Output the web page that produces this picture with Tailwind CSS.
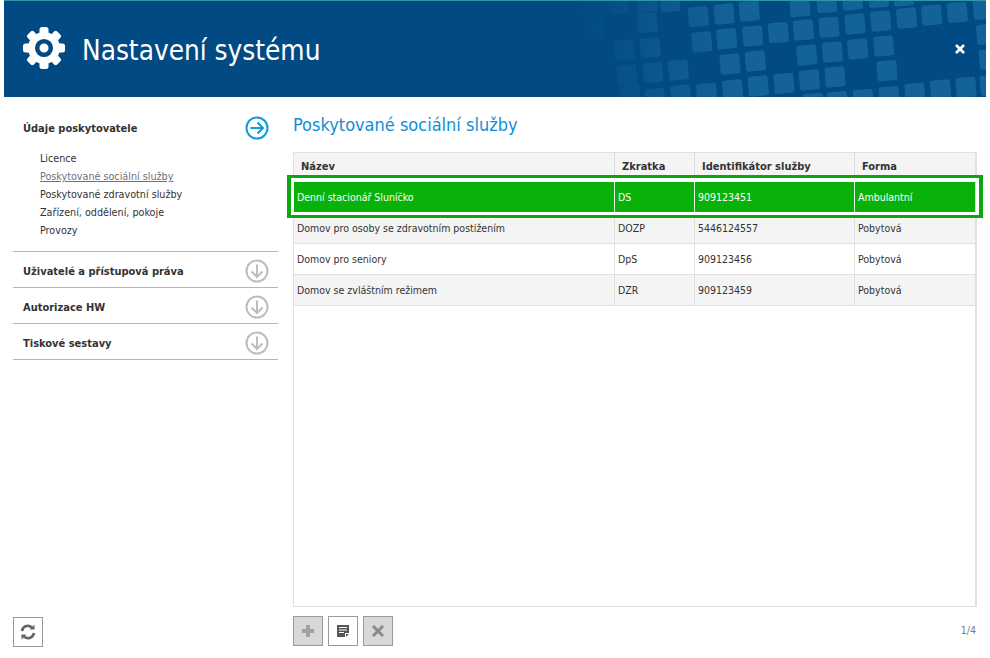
<!doctype html>
<html>
<head>
<meta charset="utf-8">
<title>Nastavení systému</title>
<script src="https://cdn.jsdelivr.net/npm/@tailwindcss/browser@4"></script>
</head>
<body class="bg-white font-['DejaVu_Sans_Condensed','DejaVu_Sans',sans-serif] text-[11px] text-[#333]">
<div class="w-[990px] h-[658px] flex flex-col overflow-hidden">
	<!-- header -->
	<div class="relative ml-1 w-[982px] h-[97px] shrink-0 bg-[#014a83] border-t border-[#2f97a8] flex items-center overflow-hidden">
		<svg class="absolute left-[576px] top-[-1px]" width="406" height="97" viewBox="-180 0 1218 291" fill="#14629a">
			<rect x="-175" y="-15" width="60" height="60" rx="7" transform="rotate(-5 -145 15)"/>
			<rect x="-95" y="-20" width="60" height="60" rx="7" transform="rotate(-5 -65 10)"/>
			<rect x="-165" y="55" width="60" height="60" rx="7" transform="rotate(-5 -135 85)"/>
			<rect x="-78" y="120" width="60" height="60" rx="7" transform="rotate(-5 -48 150)"/>
			<rect x="-70" y="195" width="60" height="60" rx="7" transform="rotate(-5 -40 225)"/>
			<rect x="-60" y="255" width="60" height="60" rx="7" transform="rotate(-5 -30 285)"/>
			<rect x="-9" y="-25" width="60" height="60" rx="7" transform="rotate(-5 21 5)"/>
			<rect x="60" y="-25" width="60" height="60" rx="7" transform="rotate(-5 90 5)"/>
			<rect x="-8" y="38" width="60" height="60" rx="7" transform="rotate(-5 22 68)"/>
			<rect x="145" y="20" width="60" height="60" rx="7" transform="rotate(-5 175 50)"/>
			<rect x="222" y="12" width="60" height="60" rx="7" transform="rotate(-5 252 42)"/>
			<rect x="298" y="3" width="60" height="60" rx="7" transform="rotate(-5 328 33)"/>
			<rect x="385" y="68" width="60" height="60" rx="7" transform="rotate(-5 415 98)"/>
			<rect x="460" y="60" width="60" height="60" rx="7" transform="rotate(-5 490 90)"/>
			<rect x="537" y="52" width="60" height="60" rx="7" transform="rotate(-5 567 82)"/>
			<rect x="615" y="42" width="60" height="60" rx="7" transform="rotate(-5 645 72)"/>
			<rect x="692" y="33" width="60" height="60" rx="7" transform="rotate(-5 722 63)"/>
			<rect x="770" y="24" width="60" height="60" rx="7" transform="rotate(-5 800 54)"/>
			<rect x="845" y="15" width="60" height="60" rx="7" transform="rotate(-5 875 45)"/>
			<rect x="922" y="7" width="60" height="60" rx="7" transform="rotate(-5 952 37)"/>
			<rect x="1000" y="-2" width="60" height="60" rx="7" transform="rotate(-5 1030 28)"/>
			<rect x="155" y="96" width="60" height="60" rx="7" transform="rotate(-5 185 126)"/>
			<rect x="230" y="86" width="60" height="60" rx="7" transform="rotate(-5 260 116)"/>
			<rect x="308" y="78" width="60" height="60" rx="7" transform="rotate(-5 338 108)"/>
			<rect x="0" y="113" width="60" height="60" rx="7" transform="rotate(-5 30 143)"/>
			<rect x="470" y="135" width="60" height="60" rx="7" transform="rotate(-5 500 165)"/>
			<rect x="547" y="126" width="60" height="60" rx="7" transform="rotate(-5 577 156)"/>
			<rect x="623" y="117" width="60" height="60" rx="7" transform="rotate(-5 653 147)"/>
			<rect x="701" y="108" width="60" height="60" rx="7" transform="rotate(-5 731 138)"/>
			<rect x="240" y="162" width="60" height="60" rx="7" transform="rotate(-5 270 192)"/>
			<rect x="316" y="153" width="60" height="60" rx="7" transform="rotate(-5 346 183)"/>
			<rect x="8" y="188" width="60" height="60" rx="7" transform="rotate(-5 38 218)"/>
			<rect x="85" y="180" width="60" height="60" rx="7" transform="rotate(-5 115 210)"/>
			<rect x="711" y="182" width="60" height="60" rx="7" transform="rotate(-5 741 212)"/>
			<rect x="325" y="228" width="60" height="60" rx="7" transform="rotate(-5 355 258)"/>
			<rect x="402" y="220" width="60" height="60" rx="7" transform="rotate(-5 432 250)"/>
			<rect x="478" y="210" width="60" height="60" rx="7" transform="rotate(-5 508 240)"/>
			<rect x="555" y="201" width="60" height="60" rx="7" transform="rotate(-5 585 231)"/>
			<rect x="15" y="265" width="60" height="60" rx="7" transform="rotate(-5 45 295)"/>
			<rect x="92" y="255" width="60" height="60" rx="7" transform="rotate(-5 122 285)"/>
			<rect x="170" y="250" width="60" height="60" rx="7" transform="rotate(-5 200 280)"/>
			<rect x="248" y="240" width="60" height="60" rx="7" transform="rotate(-5 278 270)"/>
			<rect x="795" y="250" width="60" height="60" rx="7" transform="rotate(-5 825 280)"/>
			<rect x="872" y="240" width="60" height="60" rx="7" transform="rotate(-5 902 270)"/>
			<rect x="948" y="232" width="60" height="60" rx="7" transform="rotate(-5 978 262)"/>
			<rect x="1020" y="225" width="60" height="60" rx="7" transform="rotate(-5 1050 255)"/>
			<rect x="490" y="280" width="60" height="60" rx="7" transform="rotate(-5 520 310)"/>
			<rect x="563" y="275" width="60" height="60" rx="7" transform="rotate(-5 593 305)"/>
			<rect x="640" y="268" width="60" height="60" rx="7" transform="rotate(-5 670 298)"/>
			<rect x="718" y="260" width="60" height="60" rx="7" transform="rotate(-5 748 290)"/>
			<rect x="1010" y="73" width="60" height="60" rx="7" transform="rotate(-5 1040 103)"/>
			<rect x="1018" y="148" width="60" height="60" rx="7" transform="rotate(-5 1048 178)"/>
			<rect x="450" y="-10" width="60" height="60" rx="7" transform="rotate(-5 480 20)"/>
			<rect x="530" y="-22" width="60" height="60" rx="7" transform="rotate(-5 560 8)"/>
			<rect x="607" y="-30" width="60" height="60" rx="7" transform="rotate(-5 637 0)"/>
			<rect x="685" y="-38" width="60" height="60" rx="7" transform="rotate(-5 715 -8)"/>
			<rect x="760" y="-42" width="60" height="60" rx="7" transform="rotate(-5 790 -12)"/>
		</svg>
		<div class="absolute left-[576px] top-0 w-[150px] h-full bg-linear-to-r from-[#014a83] to-[#014a8300]"></div>
		<svg class="relative ml-[18px] -mt-[2px]" width="44" height="44" viewBox="0 0 44 44">
			<g fill="#fff">
				<circle cx="22" cy="22" r="16"/>
				<rect x="17.500" y="1" width="9" height="42" rx="2.500"/>
				<rect x="17.500" y="1" width="9" height="42" rx="2.500" transform="rotate(45 22 22)"/>
				<rect x="17.500" y="1" width="9" height="42" rx="2.500" transform="rotate(90 22 22)"/>
				<rect x="17.500" y="1" width="9" height="42" rx="2.500" transform="rotate(135 22 22)"/>
			</g>
			<circle cx="22" cy="22" r="6.800" fill="none" stroke="#014a83" stroke-width="4.500"/>
		</svg>
		<div class="relative ml-[16px] mt-[4px] text-[27.7px] leading-none text-white">Nastavení systému</div>
		<svg class="absolute left-[950px] top-[42px]" width="12" height="12" viewBox="0 0 12 12"><path d="M2 2 L10 10 M10 2 L2 10" stroke="#fff" stroke-width="2.600"/></svg>
	</div>

	<div class="flex flex-1 min-h-0">
		<!-- sidebar -->
		<div class="w-[293px] shrink-0 flex flex-col pl-[13px] pr-[15px]">
			<div class="border-b border-[#b5b5b5] h-[155px]">
				<div class="flex items-center justify-between h-[62px] pl-[10px] pr-[9px] mb-[-9px]">
					<span class="font-bold mt-[2px]">Údaje poskytovatele</span>
					<svg width="24" height="24" viewBox="0 0 24 24" fill="none" stroke="#0f9ae0" stroke-width="2"><circle cx="12" cy="12" r="10.500"/><path d="M5.500 12H18M12.500 6.500 18 12l-5.500 5.500"/></svg>
				</div>
				<ul class="pl-[27px] text-[10.7px]">
					<li class="h-[18px] leading-[18px]">Licence</li>
					<li class="h-[18px] leading-[18px] text-[#6f6f7f] underline">Poskytované sociální služby</li>
					<li class="h-[18px] leading-[18px]">Poskytované zdravotní služby</li>
					<li class="h-[18px] leading-[18px]">Zařízení, oddělení, pokoje</li>
					<li class="h-[18px] leading-[18px]">Provozy</li>
				</ul>
			</div>
			<div class="border-b border-[#b5b5b5] h-[36px] pt-[3px] flex items-center justify-between pl-[10px] pr-[9px]">
				<span class="font-bold mt-[2px]">Uživatelé a přístupová práva</span>
				<svg width="24" height="24" viewBox="0 0 24 24" fill="none" stroke="#bdbdbd" stroke-width="2"><circle cx="12" cy="12" r="10.500"/><path d="M12 5.500V18M6.500 12.500 12 18l5.500-5.500"/></svg>
			</div>
			<div class="border-b border-[#b5b5b5] h-[36px] pt-[3px] flex items-center justify-between pl-[10px] pr-[9px]">
				<span class="font-bold mt-[2px]">Autorizace HW</span>
				<svg width="24" height="24" viewBox="0 0 24 24" fill="none" stroke="#bdbdbd" stroke-width="2"><circle cx="12" cy="12" r="10.500"/><path d="M12 5.500V18M6.500 12.500 12 18l5.500-5.500"/></svg>
			</div>
			<div class="border-b border-[#b5b5b5] h-[36px] pt-[3px] flex items-center justify-between pl-[10px] pr-[9px]">
				<span class="font-bold mt-[2px]">Tiskové sestavy</span>
				<svg width="24" height="24" viewBox="0 0 24 24" fill="none" stroke="#bdbdbd" stroke-width="2"><circle cx="12" cy="12" r="10.500"/><path d="M12 5.500V18M6.500 12.500 12 18l5.500-5.500"/></svg>
			</div>
			<div class="mt-auto mb-[11px]">
				<div class="w-[30px] h-[30px] border border-[#9a9a9a] flex items-center justify-center">
					<svg width="18" height="18" viewBox="0 0 18 18" fill="none" stroke="#666" stroke-width="2.600"><path d="M3 8a6 6 0 0 1 10.500-3M15 10a6 6 0 0 1-10.500 3"/><path d="M15.500 1.500v5h-5zM2.500 16.500v-5h5z" fill="#666" stroke="none"/></svg>
				</div>
			</div>
		</div>

		<!-- content -->
		<div class="flex-1 min-w-0 flex flex-col pr-[13px]">
			<h1 class="text-[18px] leading-[24px] mt-[16px] text-[#0f8fd6] h-[39px]">Poskytované sociální služby</h1>
			<div class="relative h-[455px] border border-r-2 border-[#e0e0e0]">
				<div class="flex h-[29px] bg-[#f4f4f4] font-bold leading-[28px]">
					<div class="w-[321px] pl-[7px] border-r border-[#dcdcdc]">Název</div>
					<div class="w-[80px] pl-[7px] border-r border-[#dcdcdc]">Zkratka</div>
					<div class="w-[160px] pl-[7px] border-r border-[#dcdcdc]">Identifikátor služby</div>
					<div class="flex-1 pl-[7px]">Forma</div>
				</div>
				<div class="flex h-[31px] bg-[#09b209] text-white text-[10.5px] leading-[30px]">
					<div class="w-[321px] pl-[3px] border-r border-[#e8f5e8]">Denní stacionář Sluníčko</div>
					<div class="w-[80px] pl-[3px] border-r border-[#e8f5e8]">DS</div>
					<div class="w-[160px] pl-[3px] border-r border-[#e8f5e8]">909123451</div>
					<div class="flex-1 pl-[3px]">Ambulantní</div>
				</div>
				<div class="flex h-[31px] bg-[#f4f4f4] border-b border-[#e0e0e0] text-[10.5px] leading-[30px]">
					<div class="w-[321px] pl-[3px] border-r border-[#e0e0e0]">Domov pro osoby se zdravotním postižením</div>
					<div class="w-[80px] pl-[3px] border-r border-[#e0e0e0]">DOZP</div>
					<div class="w-[160px] pl-[3px] border-r border-[#e0e0e0]">5446124557</div>
					<div class="flex-1 pl-[3px]">Pobytová</div>
				</div>
				<div class="flex h-[31px] bg-white border-b border-[#e0e0e0] text-[10.5px] leading-[30px]">
					<div class="w-[321px] pl-[3px] border-r border-[#e0e0e0]">Domov pro seniory</div>
					<div class="w-[80px] pl-[3px] border-r border-[#e0e0e0]">DpS</div>
					<div class="w-[160px] pl-[3px] border-r border-[#e0e0e0]">909123456</div>
					<div class="flex-1 pl-[3px]">Pobytová</div>
				</div>
				<div class="flex h-[31px] bg-[#f4f4f4] border-b border-[#e0e0e0] text-[10.5px] leading-[30px]">
					<div class="w-[321px] pl-[3px] border-r border-[#e0e0e0]">Domov se zvláštním režimem</div>
					<div class="w-[80px] pl-[3px] border-r border-[#e0e0e0]">DZR</div>
					<div class="w-[160px] pl-[3px] border-r border-[#e0e0e0]">909123459</div>
					<div class="flex-1 pl-[3px]">Pobytová</div>
				</div>
				<div class="absolute left-[-7px] top-[22px] w-[696px] h-[43px] border-y-[3px] border-x-4 border-[#09a80f]">
					<div class="h-full border-[3px] border-t-4 border-white"></div>
				</div>
			</div>
			<div class="flex items-center gap-[5px] mt-[9px]">
				<div class="w-[30px] h-[30px] bg-[#d8d8d8] border border-[#9a9a9a] flex items-center justify-center">
					<svg width="14" height="14" viewBox="0 0 14 14"><path d="M5 1h4v4h4v4H9v4H5V9H1V5h4z" fill="#a0a0a0"/></svg>
				</div>
				<div class="w-[30px] h-[30px] bg-white border border-[#9a9a9a] flex items-center justify-center">
					<svg width="14" height="14" viewBox="0 0 14 14"><path d="M1 1h12v8H9v4H1z" fill="#555"/><path d="M10 10h3l-3 3z" fill="#555"/><path d="M3 3.500h8M3 6h8M3 8.500h5" stroke="#fff" stroke-width="1"/></svg>
				</div>
				<div class="w-[30px] h-[30px] bg-[#d8d8d8] border border-[#9a9a9a] flex items-center justify-center">
					<svg width="14" height="14" viewBox="0 0 14 14"><path d="M2 2l10 10M12 2 2 12" stroke="#8a8a8a" stroke-width="3"/></svg>
				</div>
				<div class="ml-auto text-[#7a7a8a] pr-[1px] text-[10.500px]">1/4</div>
			</div>
		</div>
	</div>
</div>
</body>
</html>
